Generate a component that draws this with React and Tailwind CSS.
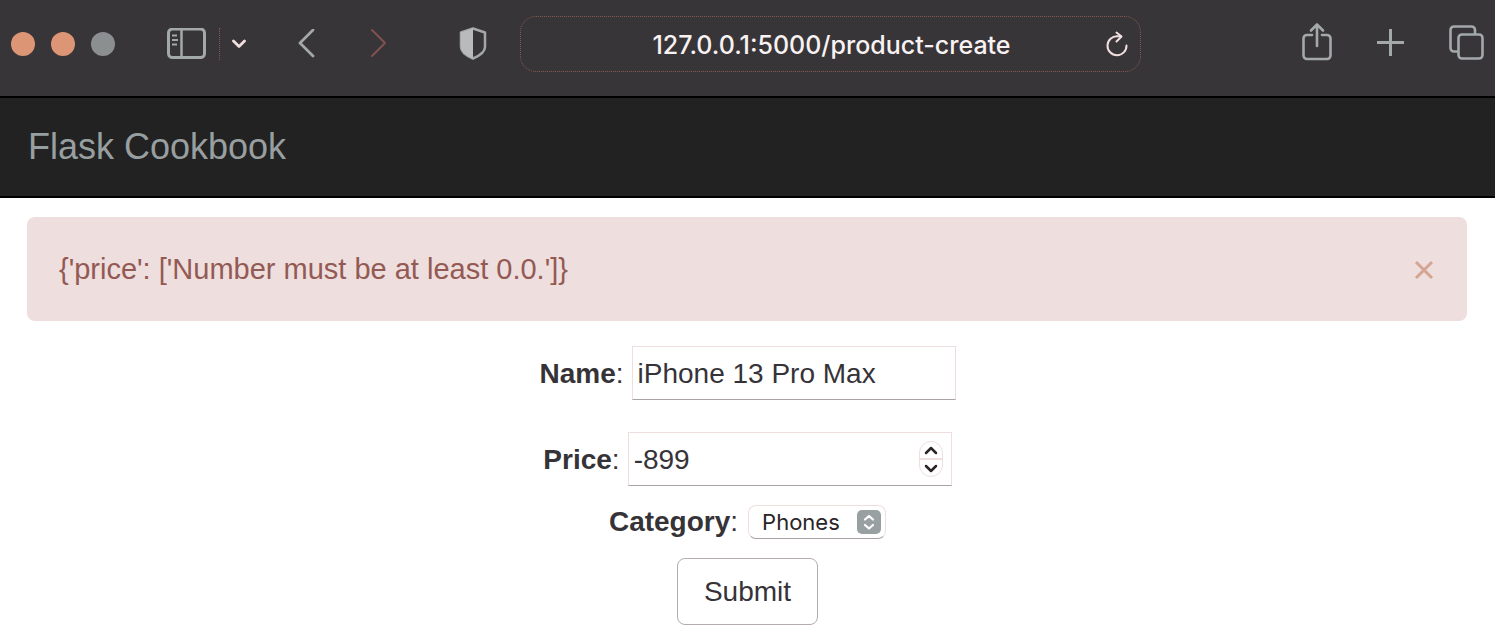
import { useState } from "react";

function Toolbar() {
  return (
    <header className="flex h-[96px] items-start bg-[#383539] px-[11px] text-[#a3a8a9]">
      <div className="mt-4 flex h-14 shrink-0 items-center">
        <div className="flex gap-4">
          <button aria-label="Close window" className="size-6 rounded-full bg-[#dc9676]" />
          <button aria-label="Minimise window" className="size-6 rounded-full bg-[#dc9676]" />
          <button aria-label="Zoom window" className="size-6 rounded-full bg-[#8b8f90]" />
        </div>
        <button aria-label="Show sidebar" className="ml-[52px]">
          <svg width="39" height="32" viewBox="0 0 39 32" fill="none" stroke="currentColor" className="block">
            <rect x="1.5" y="1" width="36" height="28.500" rx="4" strokeWidth="3" />
            <path d="M14.5 2v27" strokeWidth="2.5" />
            <path d="M5 7.500h5M5 12h6M5 16.500h5" strokeWidth="2" />
          </svg>
        </button>
        <div className="ml-[13px] h-8 border-l border-dotted border-[#8a5853]" />
        <button aria-label="Tab groups" className="ml-3 text-[#f0dfde]">
          <svg width="14" height="10" viewBox="0 0 14 10" fill="none" stroke="currentColor" strokeWidth="2.8" strokeLinecap="round" strokeLinejoin="round" className="block">
            <path d="M1.5 2 7 7.5 12.5 2" />
          </svg>
        </button>
        <button aria-label="Back" className="ml-[52px]">
          <svg width="17" height="30" viewBox="0 0 17 30" fill="none" stroke="currentColor" strokeWidth="2.8" strokeLinecap="round" strokeLinejoin="round" className="block">
            <path d="M15 1 2 14l13 13" />
          </svg>
        </button>
        <button aria-label="Forward" className="ml-[55px] text-[#82524f]">
          <svg width="17" height="30" viewBox="0 0 17 30" fill="none" stroke="currentColor" strokeWidth="1.8" strokeLinecap="round" strokeLinejoin="round" className="block">
            <path d="M2 1l13 13L2 27" />
          </svg>
        </button>
        <button aria-label="Privacy report" className="ml-[72px]">
          <svg width="28" height="34" viewBox="0 0 28 34" className="block">
            <path d="M14 1.5 26 5.500V20c0 5-5 8.500-12 11.500C7 28.500 2 25 2 20V5.500z" fill="none" stroke="currentColor" strokeWidth="2.5" strokeLinejoin="round" />
            <path d="M14 1.500V31.500C7 28.500 2 25 2 20V5.500z" fill="#b9bbbb" />
          </svg>
        </button>
      </div>
      <div className="mt-4 mr-[161px] ml-[33px] flex h-14 min-w-0 flex-1 items-center rounded-2xl border border-dotted border-[#8a5853] pr-3">
        <input
          aria-label="Address"
          type="text"
          defaultValue="127.0.0.1:5000/product-create"
          className="h-12 min-w-0 flex-1 bg-transparent pt-0.5 pl-9 text-center font-[Inter,sans-serif] text-[25px] font-medium text-[#f9f2f2] outline-none"
        />
        <button aria-label="Reload" className="text-[#f0dfde]">
          <svg width="22" height="26" viewBox="0 0 22 26" fill="none" stroke="currentColor" strokeWidth="2" strokeLinecap="round" strokeLinejoin="round" className="block">
            <path d="M15 5.200H11.500A9.500 9.500 0 1 0 20.500 14.500" />
            <path d="M10.500 1.500l5 4-5 5" />
          </svg>
        </button>
      </div>
      <div className="mt-[19px] flex shrink-0 items-center gap-[45px]">
        <button aria-label="Share">
          <svg width="30" height="38" viewBox="0 0 30 38" fill="none" stroke="currentColor" strokeWidth="2.6" strokeLinecap="round" strokeLinejoin="round" className="mt-1 block">
            <path d="M10 12H5a3.500 3.500 0 0 0-3.500 3.500v17A3.500 3.500 0 0 0 5 36h20a3.500 3.500 0 0 0 3.500-3.500v-17A3.500 3.500 0 0 0 25 12h-5" />
            <path d="M15 23V2M9 7.500 15 1.500l6 6" />
          </svg>
        </button>
        <button aria-label="New tab">
          <svg width="27" height="27" viewBox="0 0 27 27" fill="none" stroke="currentColor" strokeWidth="3" className="mt-1 block">
            <path d="M13.500 0v27M0 13.500h27" />
          </svg>
        </button>
        <button aria-label="Tab overview">
          <svg width="35" height="35" viewBox="0 0 35 35" fill="none" stroke="currentColor" strokeWidth="2.6" strokeLinejoin="round" className="mt-1 block">
            <rect x="9.500" y="9.500" width="24" height="24" rx="3.500" />
            <path d="M9 26.500H5A3.500 3.500 0 0 1 1.500 23V5A3.500 3.500 0 0 1 5 1.500h17.500A3.500 3.500 0 0 1 26 5v4" />
          </svg>
        </button>
      </div>
    </header>
  );
}

function Alert() {
  const [open, setOpen] = useState(true);
  if (!open) return null;
  return (
    <div role="alert" className="mr-7 ml-[27px] flex h-[104px] items-center justify-between rounded-lg bg-[#eedede] px-8 text-[29px] text-[#935a54]">
      <span>{"{'price': ['Number must be at least 0.0.']}"}</span>
      <button aria-label="Dismiss" onClick={() => setOpen(false)} className="pt-0.5 text-[#d5a594]">
        <svg width="22" height="22" viewBox="0 0 22 22" fill="none" stroke="currentColor" strokeWidth="3" className="block">
          <path d="M3 3l16 16M19 3 3 19" />
        </svg>
      </button>
    </div>
  );
}

const field =
  "flex h-[54px] w-[324px] items-center border border-[#eedede] border-b-[#aba3a3] bg-white pr-2 pl-[5px]";

export default function App() {
  const [price, setPrice] = useState(-899);
  return (
    <div className="min-h-screen bg-white font-['Liberation_Sans',Arial,sans-serif] text-[28px] leading-10 text-[#363338]">
      <Toolbar />
      <nav className="flex h-[102px] items-center border-y-2 border-black bg-[#222222] px-7 text-4xl text-[#989fa0]">
        <a href="#home">Flask Cookbook</a>
      </nav>
      <main className="pt-[19px]">
        <Alert />
        <form className="flex flex-col items-center pt-[25px]" onSubmit={(e) => e.preventDefault()}>
          <div className="flex items-center gap-2">
            <label htmlFor="name" className="pt-0.5"><b>Name</b>:</label>
            <div className={field}>
              <input id="name" type="text" defaultValue="iPhone 13 Pro Max" className="min-w-0 flex-1 pt-0.5 outline-none" />
            </div>
          </div>
          <div className="mt-8 flex items-center gap-2">
            <label htmlFor="price" className="pt-0.5"><b>Price</b>:</label>
            <div className={field}>
              <input
                id="price"
                type="number"
                value={price}
                onChange={(e) => setPrice(e.target.value)}
                className="min-w-0 flex-1 [appearance:textfield] pt-0.5 outline-none [&::-webkit-inner-spin-button]:appearance-none"
              />
              <div className="flex h-9 w-6 flex-col divide-y-2 divide-[#eedede] rounded-xl border border-[#eedede] text-[#2a2426]">
                <button type="button" aria-label="Increase price" onClick={() => setPrice(Number(price) + 1)} className="flex flex-1 items-center justify-center">
                  <svg width="14" height="9" viewBox="0 0 14 9" fill="none" stroke="currentColor" strokeWidth="2.500" strokeLinecap="round" strokeLinejoin="round">
                    <path d="M2 7l5-5 5 5" />
                  </svg>
                </button>
                <button type="button" aria-label="Decrease price" onClick={() => setPrice(Number(price) - 1)} className="flex flex-1 items-center justify-center">
                  <svg width="14" height="9" viewBox="0 0 14 9" fill="none" stroke="currentColor" strokeWidth="2.500" strokeLinecap="round" strokeLinejoin="round">
                    <path d="M2 2l5 5 5-5" />
                  </svg>
                </button>
              </div>
            </div>
          </div>
          <div className="mt-4 flex items-center gap-2.5">
            <label htmlFor="category"><b>Category</b>:</label>
            <div className="relative">
              <select
                id="category"
                defaultValue="Phones"
                className="block h-[34px] w-[138px] appearance-none rounded-lg border border-[#eedede] border-b-[#aba3a3] bg-white pl-[13px] font-[Inter,sans-serif] text-[22px] leading-8 text-[#2a2426] outline-none"
              >
                <option>Phones</option>
              </select>
              <svg width="24" height="24" viewBox="0 0 24 24" fill="none" className="pointer-events-none absolute top-[5px] right-[5px]">
                <rect width="24" height="24" rx="5" fill="#98a0a1" />
                <path d="M8 9.500l4-3.500 4 3.500M8 15l4 3.500 4-3.500" stroke="#fff" strokeWidth="2.200" strokeLinecap="round" strokeLinejoin="round" />
              </svg>
            </div>
          </div>
          <button type="submit" className="mt-4 h-[67px] rounded-lg border border-[#b5abab] bg-white px-[26px]">
            Submit
          </button>
        </form>
      </main>
    </div>
  );
}
